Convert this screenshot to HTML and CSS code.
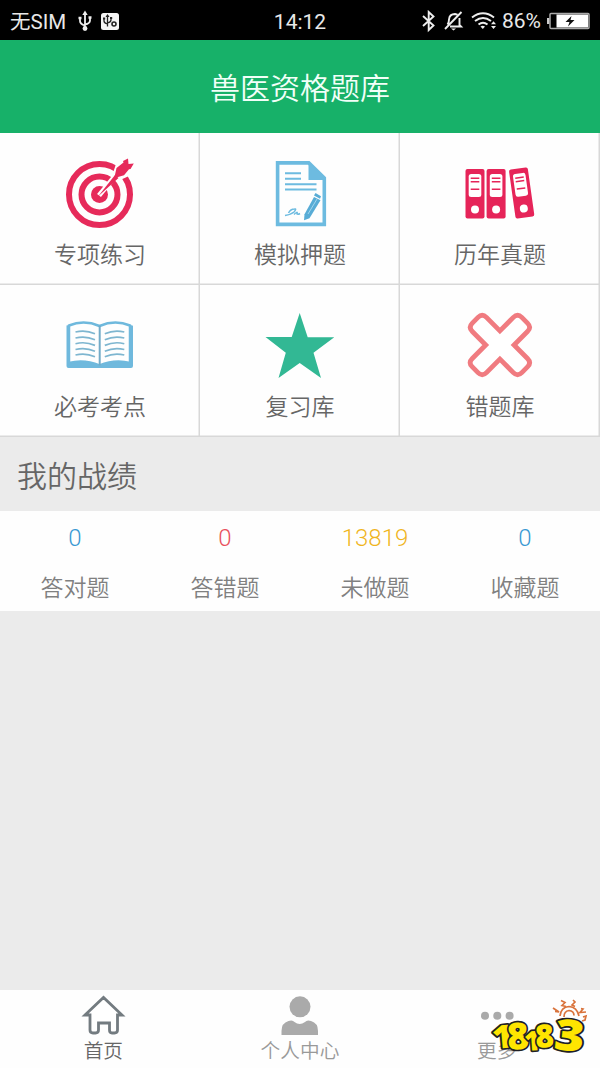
FILE: index.html
```
<!DOCTYPE html>
<html lang="zh-CN">
<head>
<meta charset="utf-8">
<title>兽医资格题库</title>
<link rel="stylesheet" href="styles.css">
</head>
<body>
<div class="status">
  <div class="status-side">
    <span class="carrier">无SIM</span>
    <svg class="ic-usb" viewBox="77 10 16 22" width="16" height="22" fill="none" stroke="#eee" stroke-width="1.8"><path d="M85 13v15M80 17v4q0 3 5 4.500M90 17v3.500q0 3-5 4"/><path d="M82.300 15L85 10.500 87.700 15z" fill="#eee" stroke="none"/><circle cx="85" cy="28.500" r="2.400" fill="#eee" stroke="none"/><path d="M78.500 18h3M88.500 17.500h3" stroke-width="2.600"/></svg>
    <svg class="ic-debug" viewBox="100 11 20 19" width="20" height="19"><rect x="101" y="12" width="18" height="17" rx="2.500" fill="#f4f4f4"/><g fill="none" stroke="#222" stroke-width="1.300"><path d="M107.500 14.500v11M104 17.500v2.500q0 2 3.500 3M111 16.500v2.500q0 2-3.500 3"/><circle cx="114" cy="23" r="2" stroke-width="1.600"/></g><path d="M105.500 16l2-3 2 3zM103 16.500h2.200v2H103zM110 16h2.200v2H110z" fill="#222"/></svg>
  </div>
  <div class="clock">14:12</div>
  <div class="status-side right">
    <svg viewBox="420 9 76 23" width="76" height="23" fill="none" stroke="#eee" stroke-width="1.900"><path d="M422 15l10.500 9.500-4.800 4.500V11l4.800 4.500L422 25"/><path d="M444 28l16.500-17M446.500 23.500q1.500-2 1.500-5 .5-5.500 6-5.500l2.500.7M458.500 17v7l1.500 1.500h-11"/><path d="M450 27.500h5l-2.500 2z" fill="#eee" stroke="none"/><path d="M471 16.500q11-8.500 22 0M474 20q8-6 16 0M477.500 23.500q4.500-3.500 9 0"/><path d="M479.500 25.500q2-1.500 4.500 0l-2.200 2.500z" fill="#eee" stroke="none"/><path d="M490 23.200l2.500-3 2.500 3zM490 25l2.500 3 2.500-3z" fill="#eee" stroke="none"/></svg>
    <span class="percent">86%</span>
    <svg class="ic-battery" viewBox="547 11 43 18" width="43" height="18"><path d="M547 17h2.500v6H547z" fill="#ccc"/><rect x="550" y="12.500" width="39" height="15" rx="1" fill="#000" stroke="#aaa" stroke-width="1.500"/><path d="M556.500 13.500H588v13h-31.500z" fill="#fff"/><path d="M571.500 15l-6 6h4l-1.500 4.500 6.500-6.500h-4z" fill="#111"/></svg>
  </div>
</div>
<header class="header">兽医资格题库</header>
<main class="main">
  <section class="grid">
    <div class="tile">
      <svg class="tile-icon" viewBox="60 153 80 80"><g fill="none" stroke="#e62a5a"><circle cx="99.500" cy="194.500" r="30.500" stroke-width="6"/><circle cx="99.500" cy="194.500" r="18" stroke-width="6"/></g><circle cx="99.500" cy="194.500" r="8.500" fill="#e62a5a"/><path d="M99 195.500L115 176" stroke="#fff" stroke-width="5" fill="none"/><path d="M111 179l5-15 8-8 14 8-9 12-11 5z" fill="#fefefe"/><path d="M98 196.500l17-21.500 3.500 3z" fill="#e62a5a"/><path d="M114.500 177l2-9 7-5.500-.5-1.500 5-2.500.5 5.500 5.300-.5-3.300 5.500-1.500.3-5 6-8.500 2.500z" fill="#e62a5a"/></svg>
      <span class="tile-label">专项练习</span>
    </div>
    <div class="tile">
      <svg class="tile-icon" viewBox="260 153 80 80"><path d="M277.600 162.900h31.200l15.500 15v46.500h-46.700z" fill="#fefefe" stroke="#6dbbe0" stroke-width="3.600"/><path d="M308.500 161.500v18.500h17z" fill="#6dbbe0"/><path d="M285 173.300h16M285 178.800h16M285 184.200h31.500M285 189.500h31.500" stroke="#6dbbe0" stroke-width="2"/><path d="M314 197l6.500 3.200-11 18-5.500 2 .5-6z" fill="#58acd6"/><path d="M315.500 193l5.500 3.200-1 2.500-6-3.200z" fill="#58acd6"/><path d="M308 214l9-15" stroke="#b5dff2" stroke-width=".8"/><path d="M285 215.500q6-1 9-3.500 3-3.500.5-3-4 0-6 4M294 214.500q4-4 3-.5 1 .8 3-.5" fill="none" stroke="#6dbbe0" stroke-width="1.500"/></svg>
      <span class="tile-label">模拟押题</span>
    </div>
    <div class="tile">
      <svg class="tile-icon" viewBox="460 153 80 80"><defs><g id="binder"><rect width="19" height="49.500" rx="2" fill="#e62459"/><rect x="3.200" y="5" width="12.600" height="23" rx="2.500" fill="#fff"/><path d="M5.200 9.200h8.600M5.200 12.800h8.600M5.200 20.200h8.600" stroke="#e62459" stroke-width="1.500"/><circle cx="9.500" cy="40.500" r="4" fill="#fff"/></g></defs><use href="#binder" x="465.500" y="169"/><use href="#binder" x="486.600" y="169"/><use href="#binder" transform="translate(508.800 169.800) rotate(-8)"/></svg>
      <span class="tile-label">历年真题</span>
    </div>
    <div class="tile">
      <svg class="tile-icon" viewBox="60 305 80 80"><path d="M66.500 325.500L70 325v38q16-5 29.500 2 13.500-7 29.500-2v-38l3.500.5q.5 0 .5 1V366q0 2-2 2H68.500q-2 0-2-2v-40z" fill="#6fb9dd"/><path d="M69 325.500q15-6 30.500.5 15.500-6.500 30.500-.5v37.500q-15-4-30.500 2.500-15.500-6.500-30.500-2.500z" fill="#fefefe" stroke="#6fb9dd" stroke-width="2.500"/><path d="M99.700 325.500v40" stroke="#72abc8" stroke-width="2"/><g fill="none" stroke="#7eb6d0" stroke-width="1.700"><path id="ruled" d="M75.500 332q10-2.500 19.500 1.700M75.500 338q10-2.500 19.500 1.700M75.500 343.700q10-2.500 19.500 1.700M75.500 349.500q10-2.500 19.500 1.700M75.500 355q10-2.500 19.500 1.700"/><use href="#ruled" transform="translate(199.800 0) scale(-1 1)"/></g></svg>
      <span class="tile-label">必考考点</span>
    </div>
    <div class="tile">
      <svg class="tile-icon" viewBox="260 305 80 80"><path d="M299.700 313l8 24.200h26.600l-20.800 15.500 7.500 25.300-21.300-15-21.200 15 7.300-25.300L265.500 337h26.200z" fill="#32b894"/></svg>
      <span class="tile-label">复习库</span>
    </div>
    <div class="tile">
      <svg class="tile-icon" viewBox="460 305 80 80"><path transform="translate(499.900 345) rotate(45)" d="M-10-10V-29q0-6 6-6H4q6 0 6 6V-10H29q6 0 6 6V4q0 6-6 6H10V29q0 6-6 6H-4q-6 0-6-6V10H-29q-6 0-6-6V-4q0-6 6-6z" fill="#fff" stroke="#f07b80" stroke-width="4.800"/></svg>
      <span class="tile-label">错题库</span>
    </div>
  </section>
  <h2 class="section-title">我的战绩</h2>
  <section class="stats">
    <div class="stat"><span class="num blue">0</span><span class="stat-label">答对题</span></div>
    <div class="stat"><span class="num red">0</span><span class="stat-label">答错题</span></div>
    <div class="stat"><span class="num yellow">13819</span><span class="stat-label">未做题</span></div>
    <div class="stat"><span class="num blue">0</span><span class="stat-label">收藏题</span></div>
  </section>
</main>
<nav class="tabs">
  <div class="tab active">
    <svg class="tab-icon" viewBox="80 993 46 44"><path d="M85 1015l18.500-17.500 18.500 17.500h-4.500v15q0 3-3 3h-2.500q-2.500 0-2.500-3v-7h-11v7q0 3-3 3H93q-3 0-3-3v-15z" fill="#fff" stroke="#737b80" stroke-width="2.800"/></svg>
    <span>首页</span>
  </div>
  <div class="tab">
    <svg class="tab-icon" viewBox="277 993 46 44"><circle cx="300" cy="1006.800" r="10.500" fill="#aaa"/><path d="M281.500 1035v-4q0-8 7-10 4-1.500 6 1 5 4 10.500 0 2-2.500 6-1 7 2 7 10v4z" fill="#aaa"/></svg>
    <span>个人中心</span>
  </div>
  <div class="tab">
    <svg class="tab-icon" viewBox="474 993 46 44" fill="#aaa"><circle cx="485" cy="1015.800" r="4"/><circle cx="497.300" cy="1015.800" r="4"/><circle cx="509.600" cy="1015.800" r="4"/></svg>
    <span>更多</span>
  </div>
  <svg class="badge" viewBox="486 994 108 70" width="108" height="70">
    <g fill="none" stroke="#d9733c" stroke-width="1.700"><path d="M560 1016q1-9 9-9.500 8 .5 10 9.500M564 1017q0-6 5-6.500 5 .5 5 5"/><path d="M553 1008l6 4-4-.5M561 1000.500l4 2-3 3 4 1M573 1000l2 2-3 3 3 1.500M581 1008.500l2 .5-3 3.500 6-.5M583 1017l3-1-1 4-3 1"/></g>
    <g class="badge-digits" stroke="#202025" stroke-width="3.400" stroke-linejoin="round" paint-order="stroke" fill="#ffe500"><text transform="translate(493 1049) rotate(-5) scale(1.150 1)" font-size="32">1</text><text transform="translate(508 1050) rotate(-4)" font-size="37">8</text><text transform="translate(525 1051) rotate(-4)" font-size="27">1</text><text transform="translate(536 1048) rotate(-4)" font-size="32">8</text><text transform="translate(553 1049) rotate(6) scale(1.200 1)" font-size="43">3</text></g>
  </svg>
</nav>
</body>
</html>
```
FILE: styles.css
```
* { box-sizing: border-box; }
body {
  margin: 0;
  height: 1068px;
  display: flex;
  flex-direction: column;
  background: #ebebeb;
  color: #666;
  font-family: Roboto, "Noto Sans CJK SC", sans-serif;
  font-weight: 350;
  overflow: hidden;
}
svg { display: block; flex: none; }
.status {
  height: 40px;
  background: #000;
  color: #e8e8e8;
  display: grid;
  grid-template-columns: 1fr auto 1fr;
  align-items: center;
  padding: 0 10px;
  font-size: 20px;
  font-weight: 400;
  line-height: 40px;
}
.status-side { display: flex; align-items: center; height: 40px; }
.right { justify-content: flex-end; }
.carrier { width: 57px; padding-top: 1px; white-space: nowrap; font-size: 20.500px; }
.ic-usb { margin-left: 10px; }
.ic-debug { margin-left: 7px; }
.clock { font-size: 21px; padding-top: 2px; }
.percent { margin: 0 6px 0 5px; font-size: 21px; }
.header {
  height: 93px;
  background: #17b169;
  color: #f2fff8;
  font-size: 30px;
  line-height: 98px;
  text-align: center;
}
.main { flex: 1; }
.grid { display: grid; grid-template-columns: repeat(3, 200px); grid-auto-rows: 152px; }
.tile {
  background: #fefefe;
  box-shadow: inset -1.5px -1.5px 0 #d8d8d8;
  display: flex;
  flex-direction: column;
  align-items: center;
  padding-top: 20px;
}
.tile-icon { width: 80px; height: 80px; }
.tile-label { font-size: 23px; line-height: 30px; margin-top: 8px; }
.section-title {
  margin: 0;
  height: 74px;
  padding-left: 17px;
  font-size: 30px;
  font-weight: 350;
  line-height: 80px;
}
.stats { height: 100px; background: #fefefe; display: grid; grid-template-columns: repeat(4, 1fr); }
.stat { display: flex; flex-direction: column; align-items: center; padding-top: 12px; }
.num { font-size: 24px; line-height: 30px; font-weight: 350; }
.blue { color: #3999d3; }
.red { color: #e9505c; }
.yellow { color: #f0b51e; }
.stat-label { font-size: 23px; line-height: 30px; margin-top: 21px; color: #808080; }
.tabs {
  position: relative;
  height: 78px;
  background: #fefefe;
  display: grid;
  grid-template-columns: repeat(3, 1fr);
  padding: 0 5px;
}
.tab { display: flex; flex-direction: column; align-items: center; padding-top: 3px; color: #999; font-size: 19.700px; line-height: 28px; }
.active { color: #666; }
.tab-icon { width: 46px; height: 44px; }
.tab span { margin-top: 1px; }
.badge { position: absolute; left: 486px; top: 4px; overflow: visible; }
.badge-digits { font-family: "Open Sans", "DejaVu Sans", sans-serif; font-weight: 800; }
```
